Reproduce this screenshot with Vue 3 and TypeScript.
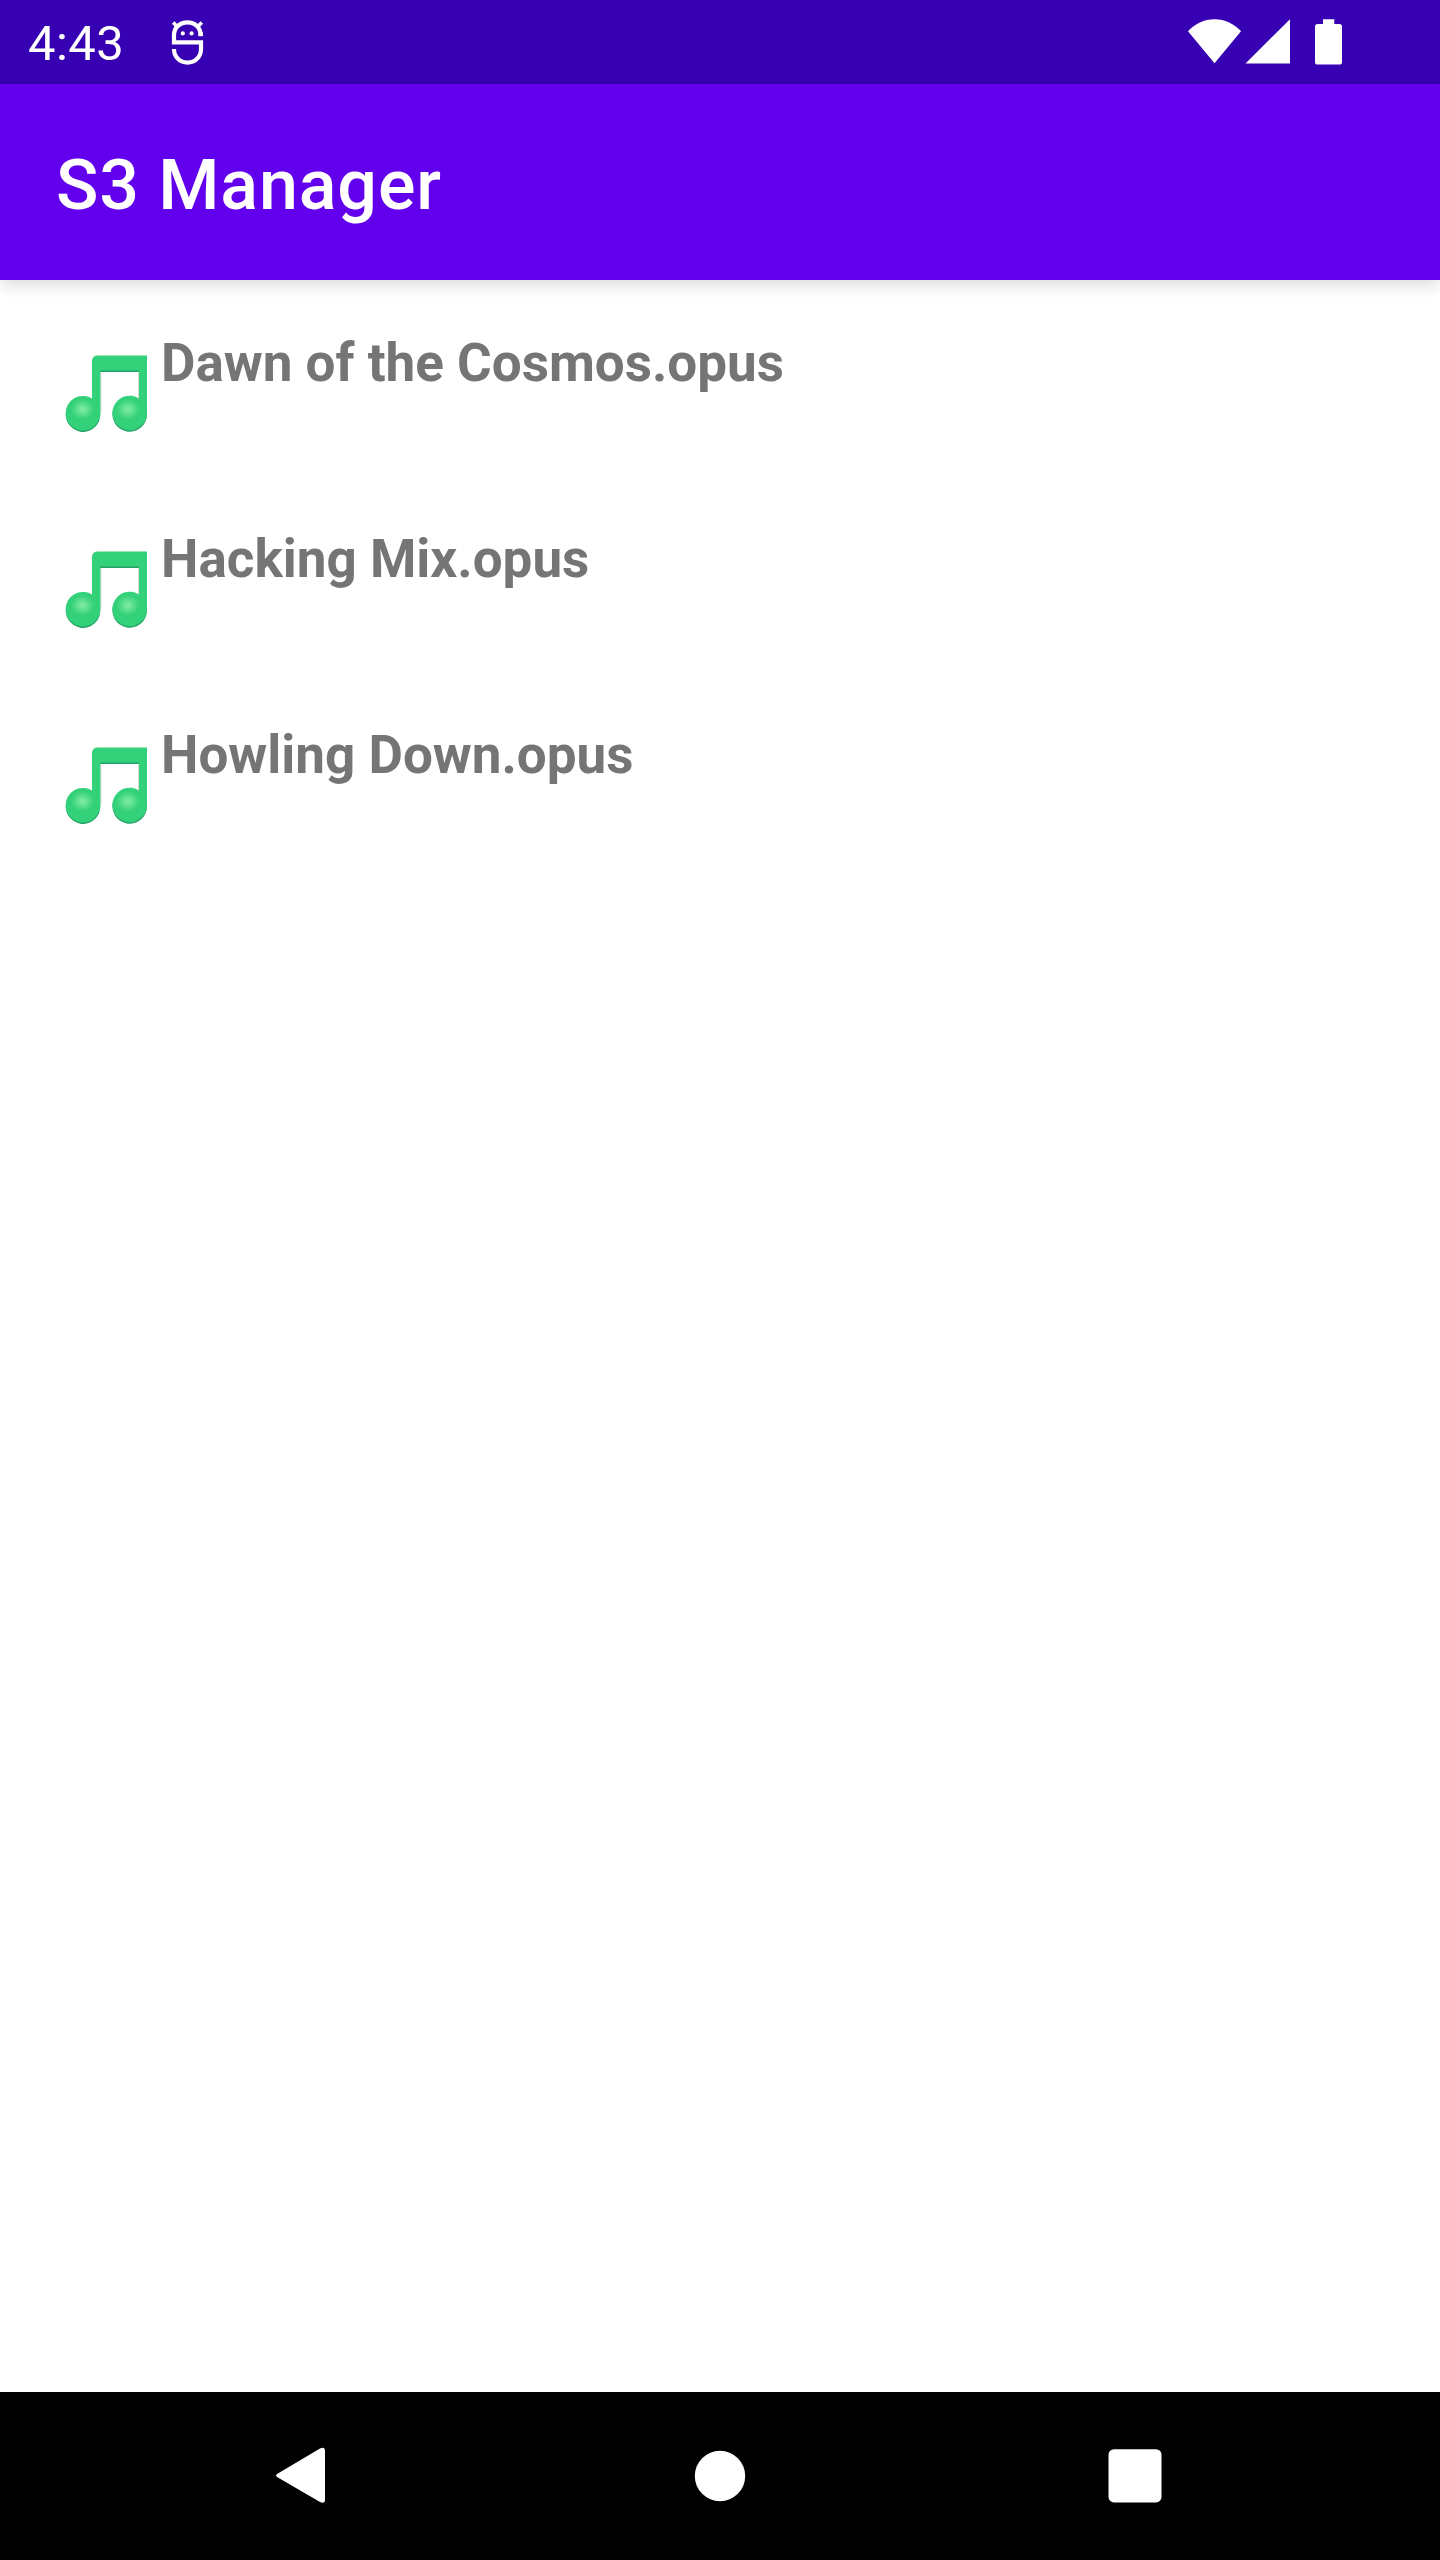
<script setup lang="ts">
interface FileEntry {
  name: string
}

const files: FileEntry[] = [
  { name: 'Dawn of the Cosmos.opus' },
  { name: 'Hacking Mix.opus' },
  { name: 'Howling Down.opus' },
]
</script>

<template>
  <div class="screen">
    <header class="status">
      <span class="clock">4:43</span>
      <svg class="debug" viewBox="0 0 40 50" width="40" height="50" fill="none" stroke="#fff">
        <path d="M34.6 18V17C34.6 9.6 29 4.3 21.5 4.3S8 9.6 8 17V24.4H35V31.3C35 39 29 44.6 21.5 44.6S8 39 8 31.3V31" stroke-width="4.2" />
        <path d="M32.4 16.2H37" stroke-width="4" />
        <path d="M7.2 4.6 10.6 8M35.8 4.6 32.4 8" stroke-width="3.6" />
        <circle cx="16.8" cy="15.4" r="2.1" fill="#fff" stroke="none" />
        <circle cx="25.6" cy="15.4" r="2.1" fill="#fff" stroke="none" />
      </svg>
      <svg class="signals" viewBox="1180 0 170 84" width="170" height="84" fill="#fff">
        <path d="M1214.5 63.3 1188 31.2C1195 23.8 1204 19.2 1214.5 19.2S1234 23.8 1241 31.2Z" />
        <path d="M1245.5 63.5H1290V19.2Z" />
        <path d="M1323 19.2H1334.3V24H1339.4Q1342 24 1342 26.6V61.9Q1342 64.6 1339.4 64.6H1317.7Q1315 64.6 1315 61.9V26.6Q1315 24 1317.7 24H1323Z" />
      </svg>
    </header>
    <div class="appbar">
      <h1 class="title">S3 Manager</h1>
    </div>
    <main class="list">
      <div v-for="file in files" :key="file.name" class="row">
        <svg class="note" viewBox="10 30 92 86" width="92" height="86">
          <defs>
            <radialGradient id="shine">
              <stop offset="0" stop-color="#83eda2" />
              <stop offset="1" stop-color="#33d17a" />
            </radialGradient>
            <path
              id="beam"
              d="M42 79V41.5Q42 35.7 48 35.7H97V92.8A17.3 17.3 0 1 1 89 78.6V50.8H50.3V92.8A17.3 17.3 0 1 1 42 78.6Z"
            />
          </defs>
          <use href="#beam" fill="#26a269" y="1.2" />
          <path d="M50.9 52.5V92M88.5 52.5V78" stroke="#d9d9d9" stroke-width="1" />
          <use href="#beam" fill="#33d17a" y="-.2" />
          <ellipse cx="32.6" cy="89.3" rx="11.5" ry="10.3" fill="url(#shine)" />
          <ellipse cx="77.8" cy="89.3" rx="11.5" ry="10.3" fill="url(#shine)" />
        </svg>
        <span class="name">{{ file.name }}</span>
      </div>
    </main>
    <nav class="nav">
      <svg viewBox="0 0 60 60" width="60" height="60" fill="#fff">
        <path d="M4.9 27.4 47 2.5Q52 .2 52 5.2V53.4Q52 58.2 47 55.9L4.9 31.6Q1.2 29.4 4.9 27.4Z" />
      </svg>
      <svg viewBox="0 0 60 60" width="60" height="60" fill="#fff">
        <circle cx="31" cy="30" r="25.2" />
      </svg>
      <svg viewBox="0 0 60 60" width="60" height="60" fill="#fff">
        <rect x="3.5" y="3.2" width="53" height="53.2" rx="5.5" />
      </svg>
    </nav>
  </div>
</template>

<style>
body {
  margin: 0;
}
</style>

<style scoped>
.screen {
  display: flex;
  flex-direction: column;
  width: 1440px;
  height: 2560px;
  background: #fff;
  font-family: Roboto, sans-serif;
}

.status {
  display: flex;
  align-items: flex-start;
  box-sizing: border-box;
  height: 84px;
  padding: 0 90px 0 28px;
  background: #3700b3;
  color: #fff;
}

.clock {
  width: 138px;
  padding-top: 4px;
  font-size: 49px;
  letter-spacing: 0.4px;
  line-height: 80px;
}

.debug {
  margin-top: 18px;
}

.signals {
  margin-left: auto;
}

.appbar {
  position: relative;
  box-sizing: border-box;
  height: 196px;
  padding: 3px 56px 0;
  background: #6200ee;
  box-shadow: 0 6px 14px rgba(0, 0, 0, 0.13);
}

.title {
  margin: 0;
  color: #fff;
  font-size: 70px;
  font-weight: 500;
  letter-spacing: 0.0125em;
  line-height: 196px;
}

.list {
  flex: 1;
}

.row {
  display: flex;
  align-items: flex-start;
  height: 196px;
}

.note {
  flex: none;
  margin: 70px 0 0 60px;
}

.name {
  margin: 51px 0 0 9px;
  color: #757575;
  font-size: 53px;
  font-weight: 700;
  line-height: 64px;
  white-space: nowrap;
}

.nav {
  display: flex;
  align-items: flex-start;
  justify-content: space-between;
  box-sizing: border-box;
  height: 168px;
  padding: 54px 275px 0 273px;
  background: #000;
}
</style>
